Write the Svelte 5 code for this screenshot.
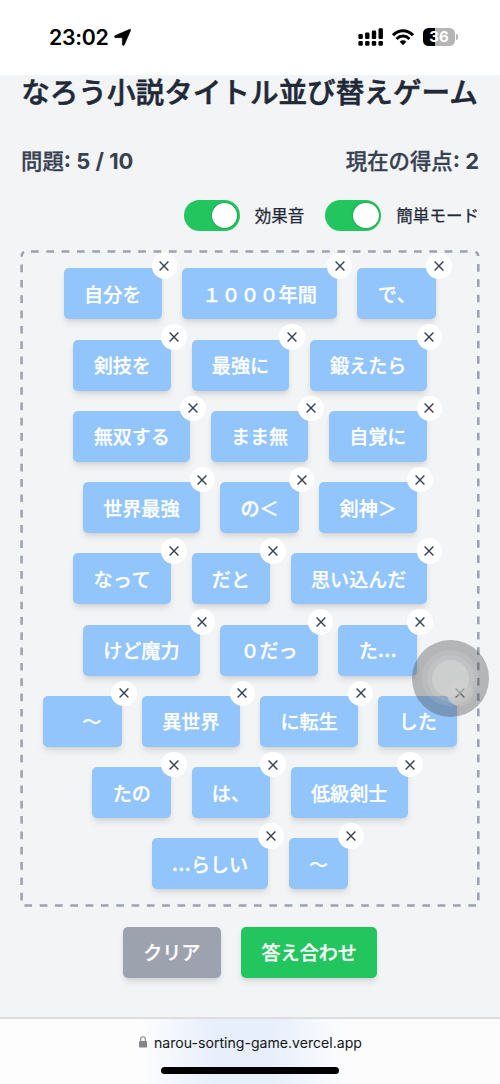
<script>
  const rows = [
    ['自分を', '１０００年間', 'で、'],
    ['剣技を', '最強に', '鍛えたら'],
    ['無双する', 'まま無', '自覚に'],
    ['世界最強', 'の＜', '剣神＞'],
    ['なって', 'だと', '思い込んだ'],
    ['けど魔力', '０だっ', 'た…'],
    ['　〜', '異世界', 'に転生', 'した'],
    ['たの', 'は、', '低級剣士'],
    ['…らしい', '〜'],
  ];
  const toggles = ['効果音', '簡単モード'];
</script>

<div class="screen">
  <header class="status">
    <div class="clock">
      <span>23:02</span>
      <svg width="17" height="17" viewBox="0 0 17 17"><path d="M15.7.3C16.5 0 17 .5 16.7 1.2L10.4 15.7C9.9 16.9 8.3 16.6 8.3 15.4V9.2Q8.3 8.7 7.8 8.7H1.5C.3 8.7 0 7.1 1.1 6.6Z" stroke="#000" stroke-width=".5" /></svg>
    </div>
    <div class="indicators">
      <svg class="signal" width="26" height="18" viewBox="0 0 26 18">
        <rect x=".4" y="6" width="4.4" height="5" rx="1.3" /><rect x="7.1" y="4.5" width="4.4" height="6.5" rx="1.3" /><rect x="13.8" y="2.5" width="4.4" height="8.5" rx="1.3" /><rect x="20.5" y=".3" width="4.4" height="10.7" rx="1.3" />
        <rect x=".4" y="13" width="4.4" height="4.8" rx="1.3" /><rect x="7.1" y="13" width="4.4" height="4.8" rx="1.3" /><rect x="13.8" y="13" width="4.4" height="4.8" rx="1.3" /><rect x="20.5" y="13" width="4.4" height="4.8" rx="1.3" />
      </svg>
      <svg class="wifi" width="22" height="17" viewBox="0 0 22 17">
        <g fill="none" stroke="#000" stroke-width="3"><path d="M1 6.2Q5.5 1.7 11 1.7T21 6.2" /><path d="M4.5 10Q7.5 7.1 11 7.1T17.5 10" /></g>
        <path d="M11 11.3Q13 11.3 14.3 12.7L11.5 15.7Q11 16.2 10.5 15.7L7.7 12.7Q9 11.3 11 11.3Z" />
      </svg>
      <div class="battery">36</div>
      <i class="nub"></i>
    </div>
  </header>

  <main>
    <h1>なろう小説タイトル並び替えゲーム</h1>
    <div class="score"><span>問題<b>: 5 / 10</b></span><span>現在の得点<b>: 2</b></span></div>
    <div class="settings">
      {#each toggles as label}
        <div class="setting"><span class="switch"><i></i></span><span>{label}</span></div>
      {/each}
    </div>

    <section class="board">
      <svg class="outline" width="460" height="657" viewBox="0 0 460 657">
        <g fill="none" stroke="#9ca3af" stroke-width="2.55">
          <path d="M11 1.5H449" stroke-dasharray="7.7 7.62" />
          <path d="M4.4 655.4H457" stroke-dasharray="7.7 7.607" />
          <path d="M1.6 14.6V650.6" stroke-dasharray="7.7 7.62" />
          <path d="M458.3 14V650.6" stroke-dasharray="7.7 7.63" />
          <path d="M1.6 6.6Q1.7 3 4 1.8" /><path d="M455.5 1.8Q458 3 458.3 6" />
        </g>
      </svg>
      {#each rows as row}
        <div class="row">
          {#each row as word}
            <div class="tile" style:width="{40.6 + word.length * 19.08}px">
              {#each word as ch}<span class="ch" class:dots={ch === '…'}>{ch}</span>{/each}
              <span class="close"><svg width="10" height="10" viewBox="0 0 10 10"><path d="M.6.6 9.4 9.4M9.4.6.6 9.4" /></svg></span>
            </div>
          {/each}
        </div>
      {/each}
    </section>

    <div class="actions">
      <button class="clear">クリア</button>
      <button class="check">答え合わせ</button>
    </div>
  </main>

  <footer>
    <div class="address">
      <svg width="8" height="12" viewBox="0 0 8 12"><rect y="5" width="8" height="6.6" rx="1.2" fill="#858589" /><path d="M1.7 5.5V3.2a2.3 2.5 0 0 1 4.6 0V5.5" fill="none" stroke="#858589" stroke-width="1.1" /></svg>
      <span>narou-sorting-game.vercel.app</span>
    </div>
    <div class="home"></div>
  </footer>

  <div class="touch"><i></i><b></b><em></em></div>
</div>

<style>
  :global(body) { margin: 0; }
  .screen { position: relative; width: 500px; height: 1084px; overflow: hidden; display: flex; flex-direction: column; background: #f3f4f6; font-family: Inter, "Noto Sans CJK JP", sans-serif; color: #1f2937; white-space: nowrap; box-sizing: border-box; }
  .status { height: 75px; flex: none; background: #fff; display: flex; justify-content: space-between; color: #000; padding: 0 42px 0 49px; box-sizing: border-box; }
  .clock { display: flex; align-items: center; gap: 5.5px; height: 74px; font-size: 21.3px; font-weight: 600; letter-spacing: -.3px; }
  .indicators { display: flex; align-items: center; height: 74px; }
  .wifi { margin-left: 8px; }
  .battery { margin-left: 9px; width: 32px; height: 17.5px; border-radius: 5.5px; background: linear-gradient(90deg, #000 12px, #b5b5b5 12px); color: #fff; font-size: 15px; font-weight: 700; line-height: 18px; text-align: center; }
  .nub { width: 2px; height: 6px; margin-left: 1px; border-radius: 0 2px 2px 0; background: #b5b5b5; }
  main { flex: 1; padding: 0 20px; display: flex; flex-direction: column; }
  h1 { margin: 0 1px 0 0; height: 34px; line-height: 32px; font-size: 28.6px; font-weight: 500; -webkit-text-stroke: .6px; text-align: center; font-family: "Noto Sans CJK JP", sans-serif; }
  .score { margin-top: 37px; height: 30px; line-height: 30px; display: flex; justify-content: space-between; padding: 0 1px 0 1px; font-size: 21.4px; font-weight: 500; -webkit-text-stroke: .3px; color: #374151; }
  .score b { font-weight: 700; font-size: 21.9px; -webkit-text-stroke: 0; }
  .settings { margin-top: 24px; height: 31px; display: flex; justify-content: flex-end; gap: 21px; font-size: 16.55px; font-weight: 400; -webkit-text-stroke: .25px; padding-right: 1px; }
  .setting { display: flex; align-items: center; gap: 15px; }
  .setting > span:last-child { position: relative; top: -1px; }
  .switch { width: 56px; height: 30.5px; border-radius: 16px; background: #22c55e; display: flex; align-items: center; justify-content: flex-end; padding-right: 2.5px; box-sizing: border-box; }
  .switch i { width: 25.5px; height: 25.5px; border-radius: 50%; background: #fff; box-shadow: 0 0 2px #0006; }
  .board { position: relative; margin-top: 19.3px; height: 656.7px; padding: 18.2px 0 0 0; box-sizing: border-box; display: flex; flex-direction: column; gap: 20.36px; }
  .outline { position: absolute; left: 0; top: 0; }
  .row { display: flex; justify-content: center; gap: 20.4px; height: 50.9px; }
  .tile, button { border-radius: 5px; box-shadow: 0 5px 7px -1px #0000001a, 0 2px 4px -2px #0000001a; color: #fff; font-size: 19.1px; font-weight: 500; -webkit-text-stroke: .25px; }
  .tile { position: relative; background: #93c5fd; display: flex; justify-content: center; align-items: center; }
  .ch { width: 19.08px; text-align: center; white-space: pre; font-family: "Noto Sans CJK JP", sans-serif; }
  .dots { font-family: Inter, sans-serif; font-weight: 700; }
  .close { position: absolute; top: -15.3px; right: -15.4px; width: 25.5px; height: 25.5px; border-radius: 50%; background: #fff; display: flex; align-items: center; justify-content: center; }
  .close path { fill: none; stroke: #374151; stroke-width: 1.4; }
  .actions { display: flex; justify-content: center; gap: 20.4px; margin-top: 20px; }
  button { border: 0; padding: 0; height: 51px; font-family: "Noto Sans CJK JP", sans-serif; }
  .clear { width: 98px; background: #9ca3af; }
  .check { width: 136px; background: #22c55e; }
  footer { height: 67px; flex: none; border-top: 2px solid #dcdddf; box-sizing: border-box; background: linear-gradient(90deg, #fdfdfd 28%, #e7effc 43%, #e7effc 54%, #fcfcfd 69%); display: flex; flex-direction: column; align-items: center; }
  .address { display: flex; align-items: center; gap: 7px; height: 46px; margin-bottom: 2px; font-size: 14.1px; color: #151515; padding-left: 1px; }
  .home { width: 178px; height: 6.5px; border-radius: 4px; background: #000; }
  .touch { position: absolute; left: 412px; top: 640px; width: 76.5px; height: 76.5px; border-radius: 50%; background: #4646465c; display: grid; place-items: center; }
  .touch > * { grid-area: 1 / 1; border-radius: 50%; }
  .touch i { width: 56px; height: 56px; background: #ffffff1a; }
  .touch b { width: 47px; height: 47px; background: #ffffff18; }
  .touch em { width: 37px; height: 37px; background: #dadada78; }
</style>
